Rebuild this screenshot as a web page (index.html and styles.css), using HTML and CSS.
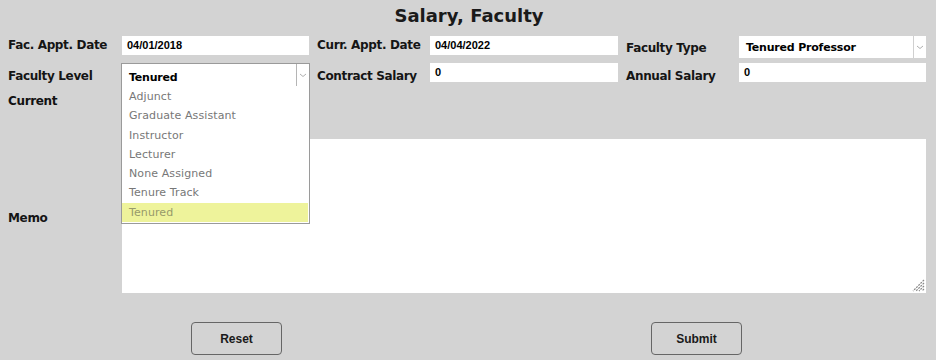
FILE: index.html
```html
<!DOCTYPE html>
<html>
<head>
<meta charset="utf-8">
<link rel="stylesheet" href="styles.css">
</head>
<body>
<div class="page">
  <h1 class="title">Salary, Faculty</h1>
  <div class="grid">
    <div class="lbl first">Fac. Appt. Date</div>
    <div class="input">04/01/2018</div>
    <div class="lbl">Curr. Appt. Date</div>
    <div class="input">04/04/2022</div>
    <div class="lbl lbl-low">Faculty Type</div>
    <div class="select plain">
      <span class="sel-text">Tenured Professor</span>
      <span class="arrow"><svg width="8" height="5" viewBox="0 0 8 5"><path d="M1 1 L4 3.5 L7 1" fill="none" stroke="#b0b0b0" stroke-width="1"/></svg></span>
    </div>

    <div class="lbl first lbl-low2">Faculty Level</div>
    <div class="select bordered">
      <span class="sel-text">Tenured</span>
      <span class="arrow"><svg width="8" height="5" viewBox="0 0 8 5"><path d="M1 1 L4 3.5 L7 1" fill="none" stroke="#b0b0b0" stroke-width="1"/></svg></span>
      <ul class="list">
        <li>Adjunct</li>
        <li>Graduate Assistant</li>
        <li>Instructor</li>
        <li>Lecturer</li>
        <li>None Assigned</li>
        <li>Tenure Track</li>
        <li class="hl">Tenured</li>
      </ul>
    </div>
    <div class="lbl lbl-low2">Contract Salary</div>
    <div class="input">0</div>
    <div class="lbl lbl-low2">Annual Salary</div>
    <div class="input">0</div>
  </div>
  <div class="current">Current</div>
  <div class="memo-row">
    <div class="lbl first memo-lbl">Memo</div>
    <div class="memo">
      <svg class="grip" width="14" height="14" viewBox="0 0 14 14">
        <path d="M13 2 L2 13 M13 5 L5 13 M13 8 L8 13 M13 11 L11 13" stroke="#888" stroke-width="1.2" stroke-dasharray="2 1"/>
      </svg>
    </div>
  </div>
  <div class="buttons">
    <button class="btn reset">Reset</button>
    <button class="btn submit">Submit</button>
  </div>
</div>
</body>
</html>
```
FILE: styles.css
```css
html, body {
  margin: 0;
  padding: 0;
  background: #d3d3d3;
  width: 936px;
  height: 360px;
  overflow: hidden;
}
.page {
  font-family: "DejaVu Sans", sans-serif;
  color: #111;
}
.title {
  margin: 0;
  height: 36px;
  line-height: 32px;
  text-align: center;
  font-size: 18px;
  font-weight: bold;
  color: #1a1a1a;
  padding-left: 2px;
}
.grid {
  display: grid;
  grid-template-columns: 122px 187px 121px 188px 121px 187px;
  grid-template-rows: 22px 24px;
  row-gap: 5px;
}
.lbl {
  padding-left: 8px;
  font-size: 12px;
  font-weight: bold;
  line-height: 16px;
  padding-top: 1px;
  white-space: nowrap;
  letter-spacing: -0.35px;
  color: #151515;
}
.lbl-low { padding-top: 4px; }
.lbl-low2 { padding-top: 5px; }
.input {
  background: #fff;
  height: 19px;
  box-sizing: border-box;
  padding-left: 5px;
  font-family: "Liberation Sans", Arial, sans-serif;
  font-size: 11px;
  font-weight: bold;
  line-height: 19px;
  color: #000;
}
.select {
  position: relative;
  background: #fff;
  box-sizing: border-box;
  display: flex;
  align-items: center;
  font-size: 11px;
  font-weight: bold;
  color: #000;
}
.plain {
  height: 22px;
}
.bordered {
  height: 24px;
  border: 1px solid #9a9a9a;
  margin-left: -1px;
  width: 189px;
  padding-top: 5px;
}
.sel-text {
  flex: 1;
  padding-left: 7px;
  letter-spacing: -0.2px;
}
.arrow {
  width: 12px;
  align-self: stretch;
  border-left: 1px solid #d0d0d0;
  display: flex;
  align-items: center;
  justify-content: center;
}
.bordered .arrow {
  width: 12px;
  border-left: 1px solid #b5b5b5;
  margin-top: -5px;
}
.list {
  position: absolute;
  left: -1px;
  top: 22px;
  width: 189px;
  box-sizing: border-box;
  margin: 0;
  padding: 1px 0 0 0;
  list-style: none;
  background: #fff;
  border: 1px solid #9a9a9a;
  border-top: none;
  z-index: 5;
}
.list li {
  height: 19.3px;
  line-height: 19.3px;
  padding-left: 7px;
  font-size: 11px;
  font-weight: normal;
  color: #777;
  letter-spacing: 0.1px;
}
.list li.hl {
  background: #eef39b;
  color: #979a6a;
  margin: 0 1px 1px 0;
}
.current {
  padding-left: 8px;
  margin-top: 4px;
  font-size: 12px;
  font-weight: bold;
  letter-spacing: -0.35px;
  height: 20px;
  line-height: 20px;
}
.memo-row {
  display: flex;
  align-items: center;
  margin-top: 28px;
}
.memo-lbl {
  width: 114px;
  padding-top: 3px;
}
.memo {
  position: relative;
  width: 804px;
  height: 154px;
  background: #fff;
}
.grip {
  position: absolute;
  right: 1px;
  bottom: 1px;
}
.buttons {
  display: flex;
  margin-top: 29px;
  padding-left: 191px;
  gap: 369px;
}
.btn {
  width: 91px;
  height: 33px;
  border: 1px solid #666;
  border-radius: 4px;
  background: #d3d3d3;
  font-family: "Liberation Sans", Arial, sans-serif;
  font-size: 12px;
  font-weight: bold;
  color: #1a1a1a;
  padding: 0;
}
```
